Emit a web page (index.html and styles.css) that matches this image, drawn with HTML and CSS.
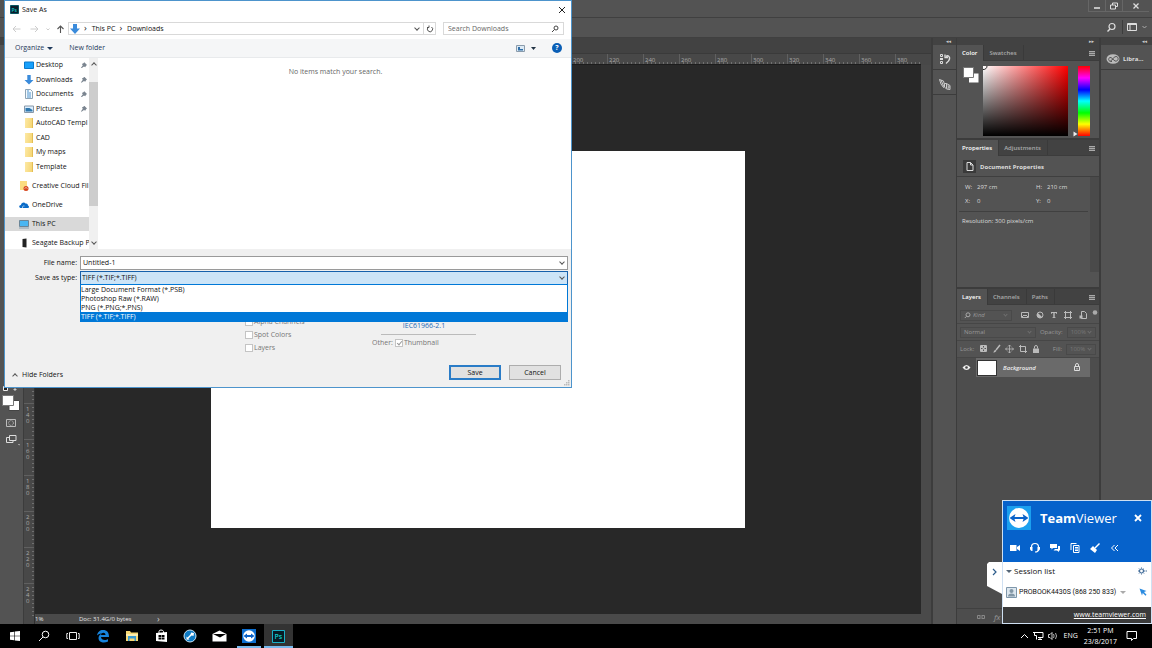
FILE: index.html
```html
<!DOCTYPE html>
<html lang="en">
<head>
<meta charset="utf-8">
<title>Save As</title>
<link rel="stylesheet" href="styles.css">
</head>
<body>
<div class="desktop">
<main class="app">
  <header class="titlebar">
    <button class="win" aria-label="Minimize"><svg width="10" height="8" viewBox="0 0 10 8"><path d="M2 6h6" stroke="#ddd" stroke-width="1.6"/></svg></button>
    <button class="win" aria-label="Restore"><svg width="10" height="8" viewBox="0 0 10 8"><path d="M3.5 3V1H8.500v3.500H7M1.500 3h5v4h-5z" fill="none" stroke="#ddd"/></svg></button>
    <button class="win wide" aria-label="Close application"><svg width="10" height="8" viewBox="0 0 10 8"><path d="M2.500 1.500l5 5m0-5l-5 5" stroke="#ddd" stroke-width="1.300"/></svg></button>
  </header>
  <div class="optionbar">
    <button aria-label="Search"><svg width="11" height="11" viewBox="0 0 11 11"><circle cx="6" cy="4.500" r="3" fill="none" stroke="#ddd" stroke-width="1.200"/><path d="M4 7L1.500 9.500" stroke="#ddd" stroke-width="1.500"/></svg></button>
    <button class="work" aria-label="Workspace"><svg width="20" height="10" viewBox="0 0 20 10"><path d="M.5 1.500h9v7h-9zM3 1.500v7M.5 2.500h9" fill="none" stroke="#ddd"/><path d="M15.500 4l2 2 2-2" fill="none" stroke="#aaa"/></svg></button>
  </div>
  <div class="workspace">
    <aside class="tools">
      <div class="strip"></div>
      <div class="toolset">
        <svg width="20" height="68" viewBox="0 0 20 68"><path d="M2.500 2.500h4v4h-4z" fill="#222" stroke="#eee"/><path d="M14 4v3M12.500 5.500h3" stroke="#ccc"/><path d="M8 16.500h10.500v10H8z" fill="#fff" stroke="#444"/><path d="M1.500 11.500h11v10h-11z" fill="#fff" stroke="#777"/><path d="M5.500 35.500h9v7h-9z" fill="none" stroke="#bbb"/><circle cx="10" cy="39" r="2.400" fill="none" stroke="#bbb" stroke-dasharray="1 .6"/><path d="M8.500 51.500h6.500v5H8.500zM8 53.500H5.500v5H12v-2" fill="none" stroke="#ddd"/><path d="M17 60h1.500v1.500z" fill="#ddd"/></svg>
      </div>
    </aside>
    <section class="document">
      <div class="doctabs"></div>
      <div class="hruler"><span></span><span></span><span></span><span></span><span></span><span></span><span></span><span></span><span></span><span></span><span></span><span></span><span></span><span></span><span>200</span><span>220</span><span>240</span><span>260</span><span>280</span><span>300</span><span>320</span><span>340</span><span>360</span><span>380</span></div>
      <div class="vruler"><span></span><span></span><span></span><span></span><span></span><span></span><span></span><span></span><span></span><span>140</span><span>160</span><span>180</span><span>200</span><span>220</span><span>240</span></div>
      <div class="canvas"><div class="page"></div></div>
      <div class="vscroll"></div>
      <div class="status"><span class="zoomlevel">1%</span><span class="docinfo">Doc: 31.4G/0 bytes</span><span class="more">›</span></div>
    </section>
    <aside class="dock">
      <div class="strip">◂◂</div>
      <button aria-label="History"><svg width="12" height="12" viewBox="0 0 12 12"><path d="M1.500 1.500h2v2h-2zM1.500 8.500h2v2h-2z" fill="none" stroke="#ddd"/><path d="M1 5h3v2H1z" fill="#ddd"/><path d="M6 1.500v3h3" fill="none" stroke="#ddd" stroke-width="1.300"/><path d="M7 3.500C9 2 11 3.500 10.500 6 10.300 8 9 9 7 10.500" fill="none" stroke="#ddd" stroke-width="1.500"/></svg></button>
      <button aria-label="Brush presets"><svg width="13" height="13" viewBox="0 0 13 13"><path d="M1.500 1.500l4 1.500 1 4-1 2.500L3 6zM3 2l2.500 6M6.500 5.500h2l3.500 2v4l-3.500-.5-2-2zM8.500 5.500v5M9.500 8h1.500v2H9.500" fill="none" stroke="#ccc"/></svg></button>
    </aside>
    <div class="panels">
      <div class="strip">▸▸</div>
      <section class="panel color">
        <div class="tabs"><button class="on">Color</button><button>Swatches</button><i class="menu"></i></div>
        <div class="picker">
          <svg class="chips" width="20" height="20" viewBox="0 0 20 20"><path d="M8 8.500h9.500v9H8z" fill="#fff"/><path d="M2.500 2.500h10v10h-10z" fill="#fff" stroke="#777"/></svg>
          <div class="field"><svg width="5" height="5" viewBox="0 0 5 5"><path d="M4 0a3.500 3.500 0 0 1-4 3.500" fill="none" stroke="#222"/></svg></div>
          <svg class="pointer" width="5" height="6" viewBox="0 0 5 6"><path d="M.5.5L4.500 3l-4 2.500z" fill="#eee"/></svg>
          <div class="hue"></div>
        </div>
      </section>
      <section class="panel props">
        <div class="tabs"><button class="on">Properties</button><button>Adjustments</button><i class="menu"></i></div>
        <h2><span class="docicon"><svg width="8" height="9" viewBox="0 0 8 9"><path d="M1 .5h3.500L7 3v5.500H1zM4.500.5V3H7" fill="none" stroke="#ddd"/></svg></span>Document Properties</h2>
        <div class="propbody">
          <div class="facts">
            <dl><dt>W:</dt><dd>297 cm</dd><dt>H:</dt><dd>210 cm</dd><dt>X:</dt><dd>0</dd><dt>Y:</dt><dd>0</dd></dl>
            <p>Resolution: 300 pixels/cm</p>
          </div>
          <div class="propscroll"></div>
        </div>
      </section>
      <section class="panel layers">
        <div class="tabs"><button class="on">Layers</button><button>Channels</button><button>Paths</button><i class="menu"></i></div>
        <div class="row filter">
          <button class="box kind"><svg width="7" height="7" viewBox="0 0 7 7"><circle cx="4" cy="2.800" r="2" fill="none" stroke="#aaa"/><path d="M2.500 4.300L.8 6" stroke="#aaa"/></svg>Kind<i class="dd"></i></button>
          <svg width="82" height="12" viewBox="0 0 82 12"><g fill="none" stroke="#bbb"><path d="M5.500 3.500h7v5h-7z"/><path d="M6 8l2-2 1 1 1-1 2 2"/><circle cx="24" cy="6" r="3"/><path d="M49.500 3.500h5v5h-5zM48 3.500h8M48 8.500h8M49.500 2v8M54.500 2v8"/><path d="M65.500 2.500h3l2 2v5h-5z"/></g><path d="M21.900 8.100A3 3 0 0 1 21.900 3.900L26.100 8.100A3 3 0 0 1 21.900 8.100z" fill="#bbb"/><path d="M35 3h6v1.800h-.8L39.800 4H38.700v4.200h.8V9h-3v-.8h.8V4h-1.100l-.4.8H35zM63.500 6.500h3v3h-3z" fill="#bbb"/><circle cx="79" cy="3.500" r="2.300" fill="#aaa"/></svg>
        </div>
        <div class="row"><button class="box blend">Normal<i class="dd"></i></button><span>Opacity:</span><span class="box num">100%<i class="dd"></i></span></div>
        <div class="row"><span>Lock:</span>
          <svg width="64" height="10" viewBox="0 0 64 10"><path d="M2.500 1.500h6v6h-6z" fill="none" stroke="#bbb"/><path d="M3 2h2v2H3zM6 2h2v2H6zM4.500 3.500h2v2h-2zM3 5h2v2H3zM6 5h2v2H6z" fill="#bbb"/><path d="M22 1l-4 5" stroke="#bbb" stroke-width="1.500"/><path d="M15 8.500c1 0 .8-3 2.500-2.500S18 8.500 15 8.500z" fill="#bbb"/><path d="M31.500 1v8M27.500 5h8M30 2.500l1.500-1.500L33 2.500M30 7.500L31.500 9 33 7.500M29 3.500L27.500 5 29 6.500M34 3.500L35.500 5 34 6.500" fill="none" stroke="#bbb" stroke-width=".8"/><path d="M42.500 1v6.500H49M41 2.500h3M44 2.500h3.500V9" fill="none" stroke="#bbb"/><path d="M55 4.500h6V9h-6z" fill="#bbb"/><path d="M56.500 4.500V3a1.500 1.500 0 0 1 3 0v1.500" fill="none" stroke="#bbb"/></svg>
          <span class="push">Fill:</span><span class="box num">100%<i class="dd"></i></span></div>
        <div class="layer">
          <svg width="19" height="9" viewBox="0 0 19 9"><path d="M5.500 4.500q4-5 8 0q-4 5-8 0z" fill="#eee"/><circle cx="9.500" cy="4.500" r="1.300" fill="#444"/></svg>
          <div class="layerbar"><span class="thumb"></span><em>Background</em><svg width="8" height="9" viewBox="0 0 8 9"><path d="M1.500 3.500h5v4h-5zM2.500 3.500V2a1.500 1.500 0 0 1 3 0v1.500M4 5v1.500" fill="none" stroke="#ddd"/></svg></div>
        </div>
        <div class="layerfoot"><svg width="10" height="6" viewBox="0 0 10 6"><path d="M4.500 1.500h-3v3h3M5.500 1.500h3v3h-3M3 3h4" fill="none" stroke="#888"/></svg><em>fx</em></div>
      </section>
    </div>
    <aside class="libs">
      <div class="strip">◂◂</div>
      <button><svg width="14" height="12" viewBox="0 0 14 12"><ellipse cx="7" cy="6" rx="6.500" ry="4.800" fill="#bbb"/><path d="M6 8.500C2 9.500 1.500 4 5 4.500L9 8c4 .8 4-4.500 1-4.500C7 3.500 7 8 4.500 7.500" fill="none" stroke="#555"/></svg>Libra...</button>
    </aside>
  </div>
</main>

<section class="dialog" role="dialog" aria-label="Save As">
  <header class="dtitle"><svg width="9" height="9" viewBox="0 0 9 9"><path d="M.5.5h8v8h-8z" fill="#0b1d2b" stroke="#0a5560"/><text x="1.500" y="6.500" class="pstiny">Ps</text></svg><h1>Save As</h1><button aria-label="Close"><svg width="8" height="8" viewBox="0 0 8 8"><path d="M1 1l6 6m0-6L1 7" stroke="#222"/></svg></button></header>
  <nav class="dnav">
    <svg width="54" height="10" viewBox="0 0 54 10"><g fill="none" stroke="#ccc"><path d="M8.500 5H1M4 2L1 5l3 3M18.500 5H26M23 2l3 3-3 3M34.500 4.500l1.500 1.500 1.500-1.500"/><path d="M48.500 9V2M45.500 5l3-3 3 3" stroke="#555" stroke-width="1.100"/></g></svg>
    <div class="address"><svg width="10" height="10" viewBox="0 0 10 10"><path d="M3 0h4v4.500h3L5 10 0 4.500h3z" fill="#3a8bdb"/></svg><span class="crumb">This PC</span><span class="crumb">Downloads</span><i class="chev"></i><button aria-label="Refresh"><svg width="8" height="8" viewBox="0 0 8 8"><path d="M2.300 2.200A2.600 2.600 0 1 0 5.500 2M3 .5v2H1" fill="none" stroke="#555"/></svg></button></div>
    <label class="search"><input type="text" placeholder="Search Downloads" aria-label="Search Downloads"><svg width="8" height="8" viewBox="0 0 8 8"><circle cx="5" cy="3" r="2" fill="none" stroke="#444"/><path d="M3.500 4.500L1 7" stroke="#444"/></svg></label>
  </nav>
  <div class="dtools"><button>Organize<i class="tri"></i></button><button>New folder</button>
    <button class="view" aria-label="View"><svg width="20" height="7" viewBox="0 0 20 7"><path d="M.5.5h8v6h-8z" fill="#dceaf5" stroke="#8a9bab"/><path d="M2 4h5v1.500H2zM2 2h2v2H2z" fill="#2f6ea8"/><path d="M15 2h5l-2.500 3z" fill="#234"/></svg></button>
    <button class="help" aria-label="Help">?</button></div>
  <div class="dbody">
    <ul class="tree">
      <li class="quick">
        <a href="#"><svg width="10" height="10" viewBox="0 0 10 10"><path d="M.5 2h9v6.500h-9z" fill="#18a0fb" stroke="#0a79cc"/></svg>Desktop<b class="pin"></b></a>
        <a href="#"><svg width="10" height="10" viewBox="0 0 10 10"><path d="M3.300 0h3.400v5h2.800L5 9.500.5 5h2.800z" fill="#3a8bdb"/></svg>Downloads<b class="pin"></b></a>
        <a href="#"><svg width="10" height="10" viewBox="0 0 10 10"><path d="M1.500.5h5l2 2v7h-7z" fill="#f4f9fd" stroke="#8da4b5"/><path d="M3 4h4M3 6h4M3 8h4M3 2h2" stroke="#4c94cf"/></svg>Documents<b class="pin"></b></a>
        <a href="#"><svg width="10" height="10" viewBox="0 0 10 10"><path d="M.5 2h9v6.500h-9z" fill="#dcefff" stroke="#8898a8"/><path d="M1.500 4h4l3 2v1.500h-7z" fill="#2f78ae"/></svg>Pictures<b class="pin"></b></a>
        <a href="#"><i class="folder"></i>AutoCAD Templ</a>
        <a href="#"><i class="folder"></i>CAD</a>
        <a href="#"><i class="folder"></i>My maps</a>
        <a href="#"><i class="folder"></i>Template</a>
      </li>
      <li><a href="#"><svg width="10" height="10" viewBox="0 0 10 10"><path d="M1 0h7v9H1z" fill="#fbdc80"/><circle cx="7" cy="7.500" r="2.500" fill="#d6451c"/><path d="M5.500 7.500q1.500-2 3 0" fill="none" stroke="#fff" stroke-width=".6"/></svg>Creative Cloud Fil</a></li>
      <li><a href="#"><svg width="10" height="10" viewBox="0 0 10 10"><path d="M1.500 8C-.5 7.500 0 5 2 5c0-2.500 3.500-3.500 4.500-1.500C8.500 3 9 5 9 5.500c1.500.5 1.200 2.500 0 2.500z" fill="#0b6cc8"/><path d="M3.500 8C3 6 5 5.500 5.500 6" fill="none" stroke="#fff" stroke-width=".6"/></svg>OneDrive</a></li>
      <li class="sel"><a href="#"><svg width="10" height="10" viewBox="0 0 10 10"><path d="M.5 1.500h9v6h-9z" fill="#4ab6f2" stroke="#6b8597"/><path d="M0 9h10" stroke="#8aa0b0"/></svg>This PC</a></li>
      <li><a href="#"><svg width="10" height="10" viewBox="0 0 10 10"><path d="M3.500 1l4-.5v9l-4-.5z" fill="#222"/></svg>Seagate Backup P</a></li>
    </ul>
    <div class="treescroll"><i class="chev up"></i><div class="thumbbar"></div><i class="chev"></i></div>
    <p class="empty">No items match your search.</p>
  </div>
  <form class="dform">
    <div class="frow"><label for="fname">File name:</label><div class="combo"><input id="fname" type="text" value="Untitled-1"><i class="chev"></i></div></div>
    <div class="frow"><label for="ftype">Save as type:</label><div class="combo open"><select id="ftype"><option>TIFF (*.TIF;*.TIFF)</option></select><i class="chev"></i>
      <ul class="types" role="listbox" aria-label="File types"><li role="option">Large Document Format (*.PSB)</li><li role="option">Photoshop Raw (*.RAW)</li><li role="option">PNG (*.PNG;*.PNS)</li><li role="option" class="hit" aria-selected="true">TIFF (*.TIF;*.TIFF)</li></ul></div></div>
    <div class="opts">
      <div class="checks"><label><input type="checkbox" disabled>Alpha Channels</label><label><input type="checkbox" disabled>Spot Colors</label><label><input type="checkbox" disabled>Layers</label></div>
      <div class="profile"><a href="#">IEC61966-2.1</a><hr><div class="other">Other: <label><input type="checkbox" disabled checked>Thumbnail</label></div></div>
    </div>
    <div class="actions"><button type="button" class="hide"><i class="chev up"></i>Hide Folders</button><button type="button" class="btn primary">Save</button><button type="button" class="btn">Cancel</button></div>
  </form>
  <svg class="grip" width="6" height="6" viewBox="0 0 6 6"><path d="M4 0h1.500v1.500H4zM2 2h1.500v1.500H2zM4 2h1.500v1.500H4zM0 4h1.500v1.500H0zM2 4h1.500v1.500H2zM4 4h1.500v1.500H4z" fill="#bbb"/></svg>
</section>

<section class="tv" aria-label="TeamViewer">
  <button class="tvtab" aria-label="Collapse"><svg width="5" height="8" viewBox="0 0 5 8"><path d="M1 1l3 3-3 3" fill="none" stroke="#2d5d8c" stroke-width="1.200"/></svg></button>
  <div class="tvbox">
    <header class="tvhead">
      <div class="tvbrand"><svg width="24" height="24" viewBox="0 0 24 24"><path d="M0 0h24v24H0z" fill="#1ba0ef"/><circle cx="12" cy="12" r="10" fill="#fff"/><path d="M2.500 12l6-4-1 3h9l-1-3 6 4-6 4 1-3h-9l1 3z" fill="#0a62c9"/></svg><h2><b>Team</b>Viewer</h2><button aria-label="Close TeamViewer"><svg width="8" height="8" viewBox="0 0 8 8"><path d="M1 1l6 6m0-6L1 7" stroke="#fff" stroke-width="1.800"/></svg></button></div>
      <div class="tvicons">
        <button aria-label="Video"><svg width="12" height="12" viewBox="0 0 12 12"><path d="M1 3h6.500v6H1zM8 5l3-2v6L8 7z" fill="#fff"/></svg></button>
        <button aria-label="Audio"><svg width="12" height="12" viewBox="0 0 12 12"><path d="M2.500 6V5a3.500 3.500 0 0 1 7 0v2.500Q9.500 10 6 10" fill="none" stroke="#fff" stroke-width="1.200"/><path d="M1 5h2.500v4H2.500Q1 8 1 7zM8.500 5H11v2q0 1-1.500 2h-1z" fill="#fff"/></svg></button>
        <button aria-label="Chat"><svg width="12" height="12" viewBox="0 0 12 12"><path d="M1 2h7v4H4L2.500 7.500V6H1z" fill="#fff"/><path d="M9 4h2v4.500h-1V10L8 8.500H4.500L6 7h3z" fill="#fff"/></svg></button>
        <button aria-label="Files"><svg width="12" height="12" viewBox="0 0 12 12"><path d="M2 8V1.500h5.500M4.500 3.500h5.500v7H4.500zM6 5.500h3M6 7h3M6 8.500h3" fill="none" stroke="#fff"/></svg></button>
        <button aria-label="Whiteboard"><svg width="12" height="12" viewBox="0 0 12 12"><path d="M10.500 1.500L6 6" stroke="#fff" stroke-width="1.500"/><path d="M4 4l4 4-2 3-5-4zM2 10l1-1" fill="#fff"/></svg></button>
        <button aria-label="Collapse toolbar"><svg width="12" height="12" viewBox="0 0 12 12"><path d="M5.500 3l-3 3 3 3M9 3L6 6l3 3" fill="none" stroke="#fff"/></svg></button>
      </div>
    </header>
    <div class="tvlist">
      <div class="tvrow"><i class="tri"></i><h3>Session list</h3><svg width="9" height="8" viewBox="0 0 9 8"><circle cx="3.500" cy="4" r="2" fill="none" stroke="#456f9b" stroke-width="1.200"/><path d="M3.500.5v1M3.500 6.500v1M0 4h1M6 4h1M1 1.500l.8.8M6 1.500l-.8.800M1 6.500l.8-.8M6 6.500l-.8-.8" stroke="#456f9b"/><path d="M7.500 4H9" stroke="#456f9b"/></svg></div>
      <div class="tvrow peer"><svg width="11" height="11" viewBox="0 0 11 11"><path d="M.5.5h10v10H.5z" fill="#dde7ef" stroke="#7e97ab"/><circle cx="5.500" cy="4" r="2" fill="#8397a6"/><path d="M2 9.500q0-3 3.500-3t3.500 3z" fill="#8397a6"/></svg><span>PROBOOK4430S (868 250 833)</span><i class="tri pale"></i><svg class="cursor" width="8" height="8" viewBox="0 0 8 8"><path d="M.5.5l7 2.500-2.500 1 2.500 2.700-1 1L3.800 5 3 7.500z" fill="#2a8be0"/></svg></div>
    </div>
    <footer><a href="#">www.teamviewer.com</a></footer>
  </div>
</section>

<footer class="taskbar">
  <div class="apps">
    <button aria-label="Start"><svg width="12" height="12" viewBox="0 0 12 12"><path d="M1 2.300l4.200-.6v4H1zM5.800 1.600L11 .9v4.800H5.800zM1 6.300h4.200v4L1 9.700zM5.800 6.300H11v4.800l-5.200-.7z" fill="#fff"/></svg></button>
    <button aria-label="Search"><svg width="12" height="12" viewBox="0 0 12 12"><circle cx="7.500" cy="4.500" r="3.300" fill="none" stroke="#fff"/><path d="M5 7l-4 4" stroke="#fff"/></svg></button>
    <button aria-label="Task view"><svg width="14" height="12" viewBox="0 0 14 12"><path d="M3.500 2.500h7v7h-7zM2 3.500H.800v5H2M12 3.500h1.200v5H12" fill="none" stroke="#eee"/></svg></button>
    <button aria-label="Edge"><svg width="14" height="14" viewBox="0 0 14 14"><path d="M1 6.500C1.500 3 4 1 7 1c4 0 6 2.500 6 7H5c0 3.500 5 3.500 7 2v2.500C8 14.500 2.500 13.500 2.500 9 2.500 7 4 5 6 4.500 3.500 4.300 2 5.500 1 6.500zM5 6h4.500C9.500 3 5.500 3 5 6z" fill="#1683dc"/></svg></button>
    <button aria-label="File Explorer"><svg width="14" height="12" viewBox="0 0 14 12"><path d="M1 1h4l1 1.500h7V11H1z" fill="#f7d774"/><path d="M1 4h12v2H1z" fill="#fdeeb0"/><path d="M3 6h8v5H9.500V8.500h-5V11H3z" fill="#3a9ad0"/></svg></button>
    <button aria-label="Store"><svg width="13" height="14" viewBox="0 0 13 14"><path d="M1 4l11-1v10L1 12z" fill="#fff"/><path d="M4 4V2.500Q4 1 6 1t2.500 1.500V4" fill="none" stroke="#fff"/><path d="M3.500 6h2.500v2H3.500zM6.500 6h3v2h-3zM3.500 8.500h2.500v2H3.500zM6.500 8.500h3v2h-3z" fill="#000"/></svg></button>
    <button aria-label="Support"><svg width="14" height="14" viewBox="0 0 14 14"><circle cx="7" cy="7" r="6" fill="#0d7ac4" stroke="#cbe6f7"/><path d="M4.500 9.500l5-5" stroke="#fff" stroke-width="1.500"/><path d="M8 3.500l3 .5-.5 3L7.500 6zM3.500 7.500l3 3-3 .3z" fill="#fff"/></svg></button>
    <button aria-label="Mail"><svg width="15" height="12" viewBox="0 0 15 12"><path d="M.5 4L7.500.5l7 3.500v7.500H.5z" fill="#fff"/><path d="M1 4h13L8 7.500z" fill="#000"/></svg></button>
    <button class="running" aria-label="TeamViewer"><svg width="14" height="14" viewBox="0 0 14 14"><path d="M0 0h14v14H0z" fill="#0d6fd0"/><circle cx="7" cy="7" r="5.800" fill="#fff"/><path d="M1.500 7l3.500-2.500V6h4V4.500L12.500 7 9 9.500V8H5v1.500z" fill="#0a62c9"/></svg></button>
    <button class="running active" aria-label="Photoshop"><svg width="13" height="13" viewBox="0 0 13 13"><path d="M.5.5h12v12H.5z" fill="#071c26" stroke="#1ab0c8"/><text x="2.500" y="9" class="ps">Ps</text></svg></button>
  </div>
  <div class="tray">
    <svg width="38" height="12" viewBox="0 0 38 12"><path d="M1 8l3.500-3.500L8 8M16 2.500h7v5h-5M14.500 2.500v3h2v4M18 9.500h4M20 7.500v2M13 2.500h3" fill="none" stroke="#fff"/><path d="M28.500 4.500h1.500l2-2v7l-2-2h-1.500z" fill="none" stroke="#fff" stroke-width=".8"/><path d="M33.500 4q1.200 2 0 4M35.500 3q2 3 0 6" fill="none" stroke="#ddd" stroke-width=".8"/></svg>
    <span>ENG</span><time>2:51 PM<br>23/8/2017</time>
    <button aria-label="Notifications"><svg width="12" height="12" viewBox="0 0 12 12"><path d="M1 1.500h9.500v7H7.500L5.500 10.500v-2H1z" fill="none" stroke="#fff"/></svg></button>
  </div>
</footer>
</div>
</body>
</html>
```

FILE: styles.css
```css
* { box-sizing: border-box; }
body { margin: 0; font-family: "Open Sans", "Noto Sans", sans-serif; font-size: 7px; line-height: 10px; color: #111; background: #535353; }
button, input, select { font: inherit; color: inherit; background: none; border: 0; padding: 0; margin: 0; border-radius: 0; }
h1, h2, h3, p, ul, dl, dd, hr { margin: 0; padding: 0; font-size: inherit; font-weight: 400; list-style: none; }
a { color: inherit; text-decoration: none; }
svg { display: block; flex: none; }
.desktop { position: relative; height: 100vh; display: flex; flex-direction: column; overflow: hidden; }
.app { flex: 1; min-height: 0; display: flex; flex-direction: column; color: #ddd; font-size: 6px; line-height: 8px; }

/* Application frame */
.titlebar { height: 18px; display: flex; justify-content: flex-end; padding-right: 3px; border-bottom: 1px solid #404040; background: #535353; }
.win { width: 17px; height: 12px; display: grid; place-items: center; border: solid #666; border-width: 0 0 1px 1px; }
.win.wide { width: 27px; }
.optionbar { height: 20px; display: flex; justify-content: flex-end; align-items: center; gap: 5px; padding: 0 5px 1px 0; border-bottom: 1px solid #404040; }
.work { border-left: 1px solid #3c3c3c; padding: 2px 0 2px 4px; }
.workspace { flex: 1; min-height: 0; display: flex; background: #3c3c3c; }
.strip { height: 7px; background: #424242; color: #ccc; font: 5px/6px "DejaVu Sans", sans-serif; text-align: right; padding-right: 5px; }
.tools { width: 24px; display: flex; flex-direction: column; border-right: 1px solid #3c3c3c; }
.toolset { flex: 1; background: #535353; padding: 339px 0 0 1px; }

/* Document window */
.document { flex: 1; min-width: 0; display: grid; grid-template: 16px 11px minmax(0, 1fr) 10px / 11px minmax(0, 1fr) 10px; background: #484848; border-right: 1px solid #3c3c3c; }
.doctabs { grid-column: 1 / -1; background: #424242; border-bottom: 1px solid #3a3a3a; }
.hruler { grid-area: 2 / 2; display: flex; padding-left: 32px; overflow: hidden; color: #aaa; font-size: 6px; line-height: 13px; border-bottom: 1px solid #1d1d1d; }
.hruler span { flex: none; width: 36px; padding-left: 1px; border-left: 1px solid #606060; background: repeating-linear-gradient(90deg, transparent 0 3px, #707070 3px 4px) left bottom / 100% 2px no-repeat; }
.vruler { grid-area: 3 / 1 / 5 / 2; display: flex; flex-direction: column; padding-top: 14px; overflow: hidden; color: #aaa; font-size: 6px; line-height: 6px; border-right: 1px solid #303030; }
.vruler span { flex: none; height: 36px; width: 10px; padding: 2px 4px 0 2px; word-break: break-all; overflow: hidden; border-top: 1px solid #606060; background: repeating-linear-gradient(180deg, transparent 0 3px, #707070 3px 4px) right top / 2px 100% no-repeat; }
.canvas { grid-area: 3 / 2; display: grid; place-items: center; background: #282828; }
.page { width: 60.3%; aspect-ratio: 297 / 210; background: #fff; }
.vscroll { grid-area: 3 / 3; background: #4a4a4a; }
.status { grid-area: 4 / 2 / 5 / 4; display: flex; align-items: center; background: #4a4a4a; color: #e6e6e6; }
.zoomlevel { width: 44px; }
.docinfo { width: 78px; }
.more { color: #ccc; font-size: 9px; }

/* Dock and panels */
.dock { width: 25px; padding: 0 1px; background: #3c3c3c; display: flex; flex-direction: column; }
.dock button { height: 24px; display: grid; place-items: center; padding-top: 4px; background: #535353; margin-bottom: 1px; }
.dock::after { content: ""; flex: 1; background: #535353; }
.panels { width: 142px; display: flex; flex-direction: column; }
.panel { background: #535353; margin-bottom: 2px; }
.tabs { display: flex; height: 16px; background: #424242; border-bottom: 1px solid #3c3c3c; font-weight: 600; color: #aaa; }
.tabs button { padding: 0 6px 0 5px; border-right: 1px solid #3a3a3a; }
.tabs .on { background: #535353; color: #fff; height: 16px; }
.menu { width: 6px; height: 5px; margin: 6px 4px 0 auto; background: repeating-linear-gradient(180deg, #aaa 0 1px, #666 1px 2px); }
.color { height: 93px; }
.picker { display: flex; padding: 5px 9px 5px 4px; height: 77px; }
.chips { margin: -1px 2px 0 0; }
.field { flex: 1; height: 70px; background: linear-gradient(transparent, #000), linear-gradient(90deg, #fff, #f00); }
.pointer { align-self: flex-end; margin: 0 0 -4px 5px; }
.hue { width: 12px; height: 70px; background: linear-gradient(#f00, #f0f 17%, #00f 34%, #0ff 50%, #0f0 67%, #ff0 83%, #f00); }
.props { height: 147px; display: flex; flex-direction: column; }
.props h2 { display: flex; align-items: center; gap: 4px; height: 21px; padding: 1px 0 0 6px; font-weight: 700; font-size: 6px; border-bottom: 1px solid #3f3f3f; }
.docicon { width: 13px; height: 13px; display: grid; place-items: center; background: #3a3a3a; }
.propbody { flex: 1; display: flex; padding-bottom: 15px; }
.propscroll { width: 9px; background: #4a4a4a; }
.facts { flex: 1; padding: 4px 2px; }
.facts dl { display: grid; grid-template-columns: 12px 59px 11px 1fr; row-gap: 4px; padding: 1px 0 5px 6px; border-bottom: 1px solid #404040; line-height: 10px; }
.facts p { padding: 5px 3px; }
.layers { flex: 1; min-height: 0; margin: 0; display: flex; flex-direction: column; background: #4d4d4d; }
.row { height: 17px; display: flex; align-items: center; gap: 4px; padding: 0 3px; background: #535353; border-bottom: 1px solid #464646; color: #999; }
.filter { height: 19px; padding: 2px 1px 0 3px; justify-content: space-between; }
.box { display: flex; align-items: center; gap: 2px; height: 11px; padding: 0 3px; border: 1px solid #494949; color: #999; white-space: nowrap; }
.kind { width: 54px; font-style: italic; }
.blend { width: 78px; }
.num { width: 30px; margin-left: auto; color: #777; }
.dd { width: 3px; height: 3px; margin: -2px 1px 0 auto; border: solid #6f6f6f; border-width: 0 1px 1px 0; rotate: 45deg; }
.push { margin-left: auto; }
.push + .num { margin-left: 0; }
.layer { display: flex; align-items: center; padding-right: 9px; background: #4d4d4d; }
.layerbar { flex: 1; display: flex; align-items: center; gap: 7px; height: 19px; padding: 0 9px 0 2px; background: #6a6a6a; color: #eee; font-weight: 600; }
.layerbar svg { margin-left: auto; }
.thumb { width: 18px; height: 14px; background: #fff; outline: 1px solid #333; }
.layerfoot { margin-top: auto; height: 16px; display: flex; align-items: center; gap: 8px; padding-left: 19px; color: #999; border-top: 1px solid #404040; font-size: 8px; }
.libs { width: 53px; padding-left: 2px; display: flex; flex-direction: column; }
.libs button { height: 24px; display: flex; align-items: center; gap: 3px; padding: 4px 0 0 5px; background: #535353; font-weight: 700; margin-bottom: 1px; }
.libs::after { content: ""; flex: 1; background: #535353; }

/* Save dialog */
.dialog { position: absolute; left: 4px; top: 0; width: 568px; display: flex; flex-direction: column; background: #fff; border: 1px solid #4d94cc; }
.dtitle { display: flex; align-items: center; gap: 3px; height: 17px; padding: 0 5px; }
.dtitle button { margin-left: auto; }
.dnav { display: flex; align-items: center; height: 21px; padding: 0 7px; }
.address { flex: 1; display: flex; align-items: center; height: 13px; margin-left: 2px; padding-left: 1px; border: 1px solid #d9d9d9; }
.crumb::before { content: "›"; padding: 0 5px 0 4px; font-size: 9px; }
.address .chev { margin: 0 4px 0 auto; }
.address button { height: 11px; width: 12px; display: grid; place-items: center; border-left: 1px solid #d9d9d9; }
.search { width: 121px; height: 13px; display: flex; align-items: center; margin-left: 7px; padding: 0 4px; border: 1px solid #d9d9d9; }
.search input { flex: 1; min-width: 0; height: 11px; }
.search input::placeholder { color: #666; }
.chev { flex: none; width: 4px; height: 4px; border: solid #555; border-width: 0 1px 1px 0; transform: translateY(-1px) rotate(45deg); }
.chev.up { transform: translateY(1px) rotate(225deg); }
.dtools { display: flex; align-items: center; gap: 16px; height: 19px; padding: 0 9px 0 10px; background: #f5f6f7; border-bottom: 1px solid #e8eaec; color: #1e395b; }
.dtools button { display: flex; align-items: center; gap: 3px; }
.tri { border: 3px solid transparent; border-top: 3px solid #1e395b; border-bottom: 0; }
.dtools .view { margin-left: auto; }
.dtools .help { width: 10px; height: 10px; justify-content: center; border-radius: 50%; background: #0a5eb5; color: #fff; font-weight: 700; line-height: 10px; }
.dbody { display: flex; height: 191px; }
.tree { width: 84px; overflow: hidden; }
.tree li { margin-bottom: 5px; }
.tree a { display: flex; align-items: center; gap: 3px; height: 14px; padding-left: 14px; white-space: nowrap; }
.tree .quick { display: grid; grid-auto-rows: 1fr; height: 116px; margin-bottom: 5px; }
.quick a { height: auto; padding-left: 19px; gap: 2px; }
.sel { background: #d9d9d9; }
.folder { flex: none; width: 8px; height: 10px; margin: 0 1px; background: linear-gradient(100deg, #fde9a5, #f5d573); border-right: 1px solid #e3bd55; }
.pin { width: 6px; height: 6px; margin: 0 2px 0 auto; background: #7b8590; clip-path: polygon(55% 0, 100% 45%, 85% 60%, 70% 85%, 50% 70%, 8% 100%, 0 92%, 30% 50%, 15% 30%, 40% 15%); }
.treescroll { width: 9px; display: flex; flex-direction: column; align-items: center; justify-content: space-between; padding: 4px 0; background: #f0f0f0; }
.thumbbar { width: 9px; height: 124px; margin-bottom: 20px; background: #cdcdcd; }
.empty { flex: 1; padding: 9px 0 0 2px; text-align: center; color: #666; }
.dform { display: flex; flex-direction: column; padding: 7px 3px 7px 0; background: #f0f0f0; }
.frow { display: grid; grid-template-columns: 72px 1fr; column-gap: 3px; margin-bottom: 1px; text-align: right; line-height: 14px; }
.combo { position: relative; display: flex; align-items: center; height: 14px; padding: 0 3px 0 2px; border: 1px solid #9a9a9a; background: #fff; }
.combo input, .combo select { flex: 1; min-width: 0; height: 12px; line-height: 12px; appearance: none; }
.combo.open { padding-left: 1px; background: #cce4f7; border-color: #1660ab; }
.types { position: absolute; z-index: 1; left: -1px; right: -1px; top: 12px; background: #fff; border: 1px solid #0078d7; text-align: left; line-height: 9px; }
.types li { padding-left: 0; }
.types .hit { background: #0078d7; color: #fff; }
.opts { display: flex; padding: 29px 92px 0 240px; color: #777; }
.opts label { display: flex; align-items: center; gap: 1px; }
.opts input { appearance: none; width: 8px; height: 8px; border: 1px solid #c4c4c4; background: #fff; }
.opts input:checked::after { content: ""; display: block; width: 2px; height: 4px; margin: 0 0 0 2px; border: solid #999; border-width: 0 1px 1px 0; rotate: 40deg; }
.checks { display: grid; grid-auto-rows: 13px; align-items: center; }
.profile { margin-left: auto; width: 104px; padding-top: 6px; }
.profile a { display: block; text-align: center; color: #2169b5; }
.profile hr { margin: 3px 0 3px 9px; border: 0; border-top: 1px solid #bbb; }
.other { display: flex; gap: 2px; }
.actions { display: flex; align-items: center; gap: 8px; margin-top: 11px; padding-right: 7px; }
.hide { display: flex; align-items: center; gap: 5px; margin: 4px auto 0 8px; }
.btn { width: 52px; height: 15px; background: #e1e1e1; border: 1px solid #adadad; }
.primary { border: 2px solid #2a7cc7; line-height: 10px; }
.grip { position: absolute; right: 1px; bottom: 1px; }
.pstiny, .ps { font-size: 5px; font-weight: 600; fill: #1cc; }
.ps { font-size: 7px; }

/* TeamViewer panel */
.tv { position: absolute; right: 0; bottom: 24px; display: flex; align-items: flex-start; }
.tvtab { width: 15px; height: 32px; margin-top: 62px; padding: 0 0 12px 5px; background: #fff; clip-path: polygon(2px 0, 100% 0, 100% 100%, 0 75%, 0 2px); }
.tvbox { width: 150px; border: 1px solid #cfe0f2; background: #fff; }
.tvhead { background: #0662cb; color: #fff; height: 61px; }
.tvbrand { display: flex; align-items: center; gap: 9px; padding: 4px 9px 0 4px; }
.tvbrand h2 { font-size: 13px; line-height: 24px; padding-top: 1px; }
.tvbrand button { margin-left: auto; padding-top: 1px; }
.tvicons { display: flex; gap: 8px; padding: 12px 6px 0; }
.tvicons button { width: 12px; }
.tvlist { height: 45px; padding: 2px 4px 2px 3px; }
.tvrow { display: flex; align-items: center; gap: 2px; height: 14px; }
.tvrow h3 { font-size: 8px; flex: 1; }
.tvrow .tri { border-top-color: #567; }
.peer { margin-top: 7px; font: 7px/10px Roboto, sans-serif; }
.tvrow .pale { margin-left: 2px; border-top-color: #aaa; }
.cursor { margin-left: auto; }
.tv footer { height: 16px; padding: 2px 5px; text-align: right; background: #3b3b3b; color: #fff; line-height: 11px; }
.tv footer a { text-decoration: underline; }

/* Taskbar */
.taskbar { display: flex; justify-content: space-between; height: 24px; background: #000; color: #fff; }
.apps { width: 293px; display: grid; grid-template-columns: repeat(10, 1fr); }
.apps button { display: grid; place-items: center; }
.apps .running { background: linear-gradient(#76b9ed, #76b9ed) center bottom / 24px 2px no-repeat; }
.apps .active { background-color: #333; background-size: 100% 2px; }
.tray { display: flex; align-items: center; gap: 6px; padding-right: 14px; }
.tray time { text-align: center; line-height: 11px; }
.tray button { margin-left: 3px; }
```
